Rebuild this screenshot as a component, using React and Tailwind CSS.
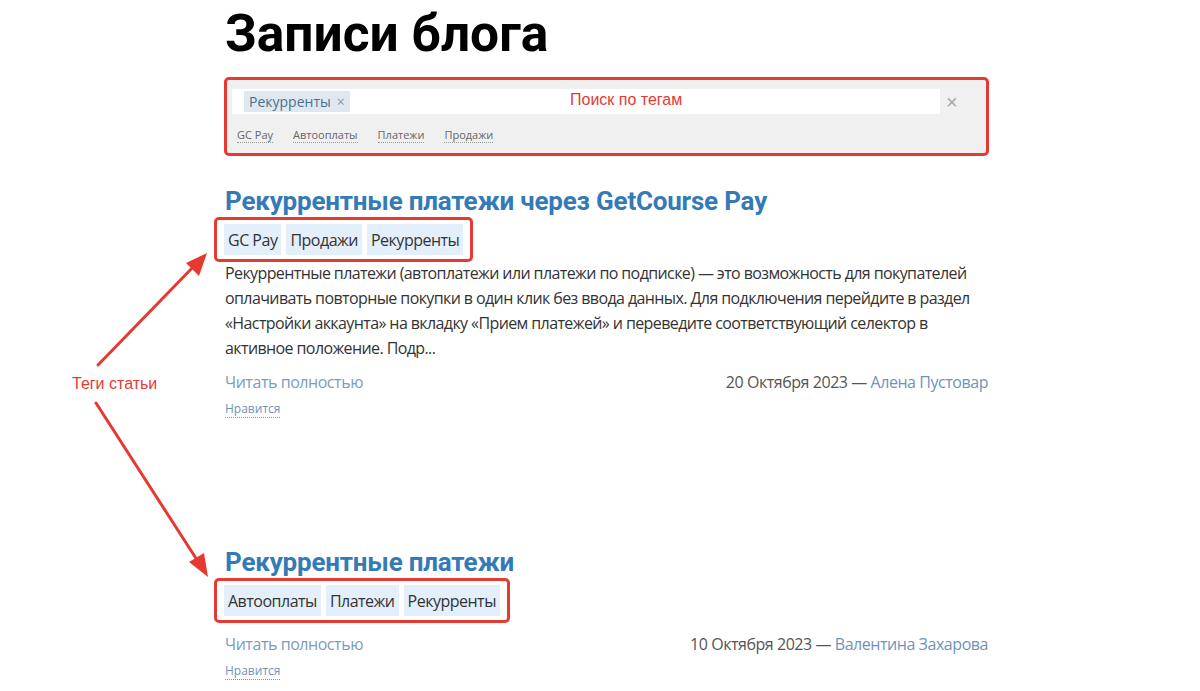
import React from "react";

const openSans = { fontFamily: '"Open Sans", "Noto Sans", sans-serif' };
const roboto = { fontFamily: 'Roboto, "Noto Sans", sans-serif' };
const arial = { fontFamily: '"Liberation Sans", Arial, sans-serif' };

function TagChip({ children }) {
  return (
    <span className="bg-[#e3effb] px-[4px] h-[31px] flex items-center text-[16px] text-[#333] tracking-[-0.5px]" style={openSans}>
      {children}
    </span>
  );
}

function Post({ title, tags, excerpt, date, author, gapTop }) {
  return (
    <article className={gapTop}>
      <h2 className="text-[26px] font-bold text-[#337ab7] leading-[30px] tracking-[-0.2px]" style={roboto}>
        {title}
      </h2>
      <div className="-ml-[11px] mt-[1px] inline-flex gap-[5px] border-[3px] border-[#e53a32] rounded-[5px] px-[7px] py-[4px]">
        {tags.map((t) => (
          <TagChip key={t}>{t}</TagChip>
        ))}
      </div>
      {excerpt && (
        <p className="-mt-[1px] text-[16px] leading-[25px] text-[#333] tracking-[-0.6px]" style={openSans}>
          {excerpt}
        </p>
      )}
      <div
        className={`flex justify-between items-center text-[16px] tracking-[-0.45px] ${excerpt ? "mt-[9px]" : "mt-[9px]"}`}
        style={openSans}
      >
        <a className="text-[#7a9cc0]">Читать полностью</a>
        <span className="text-[#555]">
          {date} — <a className="text-[#6f93ba]">{author}</a>
        </span>
      </div>
      <div className="mt-[1px]">
        <a className="text-[12px] text-[#6f93ba] border-b border-dotted border-[#6f93ba] leading-[16px]" style={openSans}>
          Нравится
        </a>
      </div>
    </article>
  );
}

export default function App() {
  return (
    <div className="relative w-[1200px] h-[691px] bg-white overflow-hidden">
      <main className="ml-[225px] w-[763px]">
        <h1 className="pt-[4px] text-[51.5px] font-bold text-black leading-[60px]" style={roboto}>
          Записи блога
        </h1>

        <div className="mt-[13px] -ml-[1px] w-[765px] border-[3px] border-[#e53a32] rounded-[5px] bg-[#f0f0f0] px-[5px] pt-[9px] pb-[10px]">
          <div className="flex items-center">
            <div className="relative flex-1 h-[25px] bg-white flex items-center pl-[12px]">
              <span className="flex items-center h-[21px] bg-[#dfe8f0] px-[5px] text-[14px] text-[#4c6f8e]" style={openSans}>
                Рекурренты
                <span className="ml-[6px] text-[14px] text-[#8a9aa8]">×</span>
              </span>
              <span className="absolute left-[338px] top-[0px] text-[16px] text-[#e53a32] leading-[22px]" style={arial}>
                Поиск по тегам
              </span>
            </div>
            <span className="w-[41px] pl-[6px] text-left text-[20px] text-[#a8a8a8] leading-none" style={arial}>
              ×
            </span>
          </div>
          <div className="mt-[13px] flex gap-[20px] pl-[5px] text-[11px] text-[#666]" style={openSans}>
            {["GC Pay", "Автооплаты", "Платежи", "Продажи"].map((t) => (
              <a key={t} className="border-b border-dotted border-[#999] leading-[15px]">
                {t}
              </a>
            ))}
          </div>
        </div>

        <Post
          gapTop="mt-[30px]"
          title="Рекуррентные платежи через GetCourse Pay"
          tags={["GC Pay", "Продажи", "Рекурренты"]}
          excerpt="Рекуррентные платежи (автоплатежи или платежи по подписке) — это возможность для покупателей оплачивать повторные покупки в один клик без ввода данных. Для подключения перейдите в раздел «Настройки аккаунта» на вкладку «Прием платежей» и переведите соответствующий селектор в активное положение. Подр..."
          date="20 Октября 2023"
          author="Алена Пустовар"
        />

        <Post
          gapTop="mt-[128px]"
          title="Рекуррентные платежи"
          tags={["Автооплаты", "Платежи", "Рекурренты"]}
          date="10 Октября 2023"
          author="Валентина Захарова"
        />
      </main>

      {/* callout label with two arrows pointing at the tag groups */}
      <span className="absolute left-[72px] top-[372px] text-[16px] text-[#e53a32]" style={arial}>
        Теги статьи
      </span>
      <svg className="absolute left-0 top-0 pointer-events-none" width="1200" height="691">
        <g stroke="#e53a32" strokeWidth="3" strokeLinecap="round" fill="none">
          <line x1="98" y1="365" x2="196" y2="264" />
          <line x1="96" y1="403" x2="199" y2="563" />
        </g>
        <g fill="#e53a32">
          <polygon points="207,253 199,276 186,263" />
          <polygon points="208,577 189,562 204,553" />
        </g>
      </svg>
    </div>
  );
}
